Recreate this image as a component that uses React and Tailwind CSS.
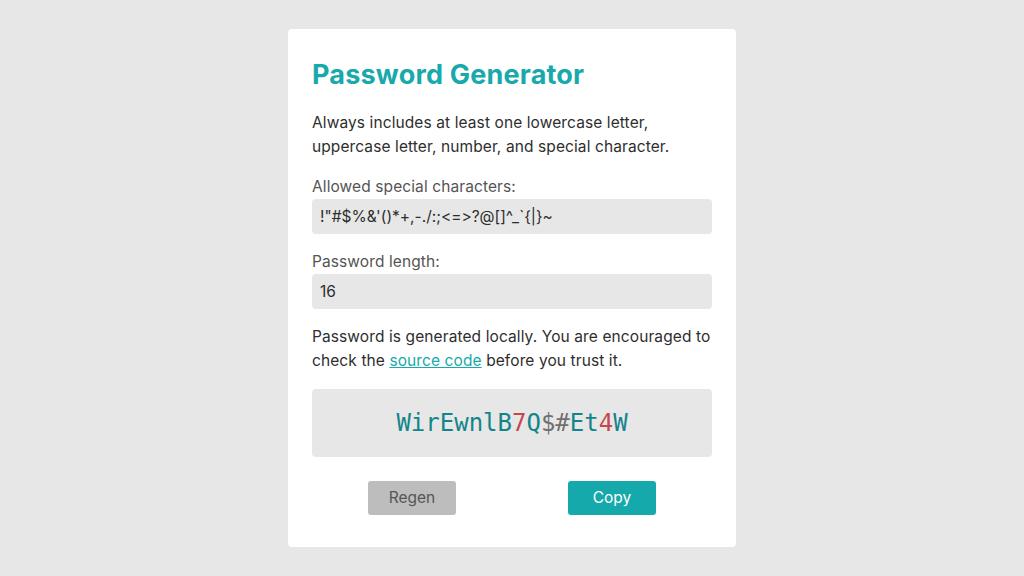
import React from 'react'

const password = 'WirEwnlB7Q$#Et4W'

const charClass = (c) => {
  if (/[0-9]/.test(c)) return 'text-[#c8474f]'
  if (/[a-zA-Z]/.test(c)) return 'text-[#13858a]'
  return 'text-[#707070]'
}

const App = () => {
  return (
    <div className="min-h-screen w-full bg-[#e7e7e7] flex justify-center pt-[29px] font-['Inter','Noto_Sans',sans-serif] [font-variant-ligatures:none]">
      <section className="w-[448px] h-[518px] bg-white rounded-[4px] px-6 pt-[28px]">
        <h1 className="text-[27px] leading-[36px] font-bold text-[#17a9ab] tracking-[0.2px]">
          Password Generator
        </h1>

        <p className="mt-[18px] text-[15.5px] leading-6 text-[#2e2e2e] tracking-[0.1px]">
          Always includes at least one lowercase letter, uppercase letter, number, and special character.
        </p>

        <label className="block mt-[16px] text-[15.5px] leading-6 text-[#555] tracking-[0.1px]">Allowed special characters:</label>
        <div className="h-[35px] rounded-[4px] bg-[#e7e7e7] px-2 flex items-center text-[15.5px] text-[#2e2e2e]">
          {'!"#$%&\'()*+,-./:;<=>?@[]^_`{|}~'}
        </div>

        <label className="block mt-[16px] text-[15.5px] leading-6 text-[#555] tracking-[0.1px]">Password length:</label>
        <div className="h-[35px] rounded-[4px] bg-[#e7e7e7] px-2 flex items-center text-[15.5px] text-[#2e2e2e]">
          16
        </div>

        <p className="mt-[16px] text-[15.5px] leading-6 text-[#2e2e2e] tracking-[0.1px]">
          Password is generated locally. You are encouraged to check the{' '}
          <a href="#" className="text-[#17a9ab] underline">source code</a> before you trust it.
        </p>

        <div className="mt-[16px] h-[68px] rounded-[4px] bg-[#e7e7e7] flex items-center justify-center font-['DejaVu_Sans_Mono',monospace] text-[24px]">
          {password.split('').map((c, i) => (
            <span key={i} className={charClass(c)}>{c}</span>
          ))}
        </div>

        <div className="mt-6 grid grid-cols-2">
          <div className="flex justify-center">
            <button className="w-[88px] h-[34px] rounded-[3px] bg-[#bdbdbd] text-[#555] text-[15.5px]">Regen</button>
          </div>
          <div className="flex justify-center">
            <button className="w-[88px] h-[34px] rounded-[3px] bg-[#16a9ac] text-white text-[15.5px]">Copy</button>
          </div>
        </div>
      </section>
    </div>
  )
}

export default App
